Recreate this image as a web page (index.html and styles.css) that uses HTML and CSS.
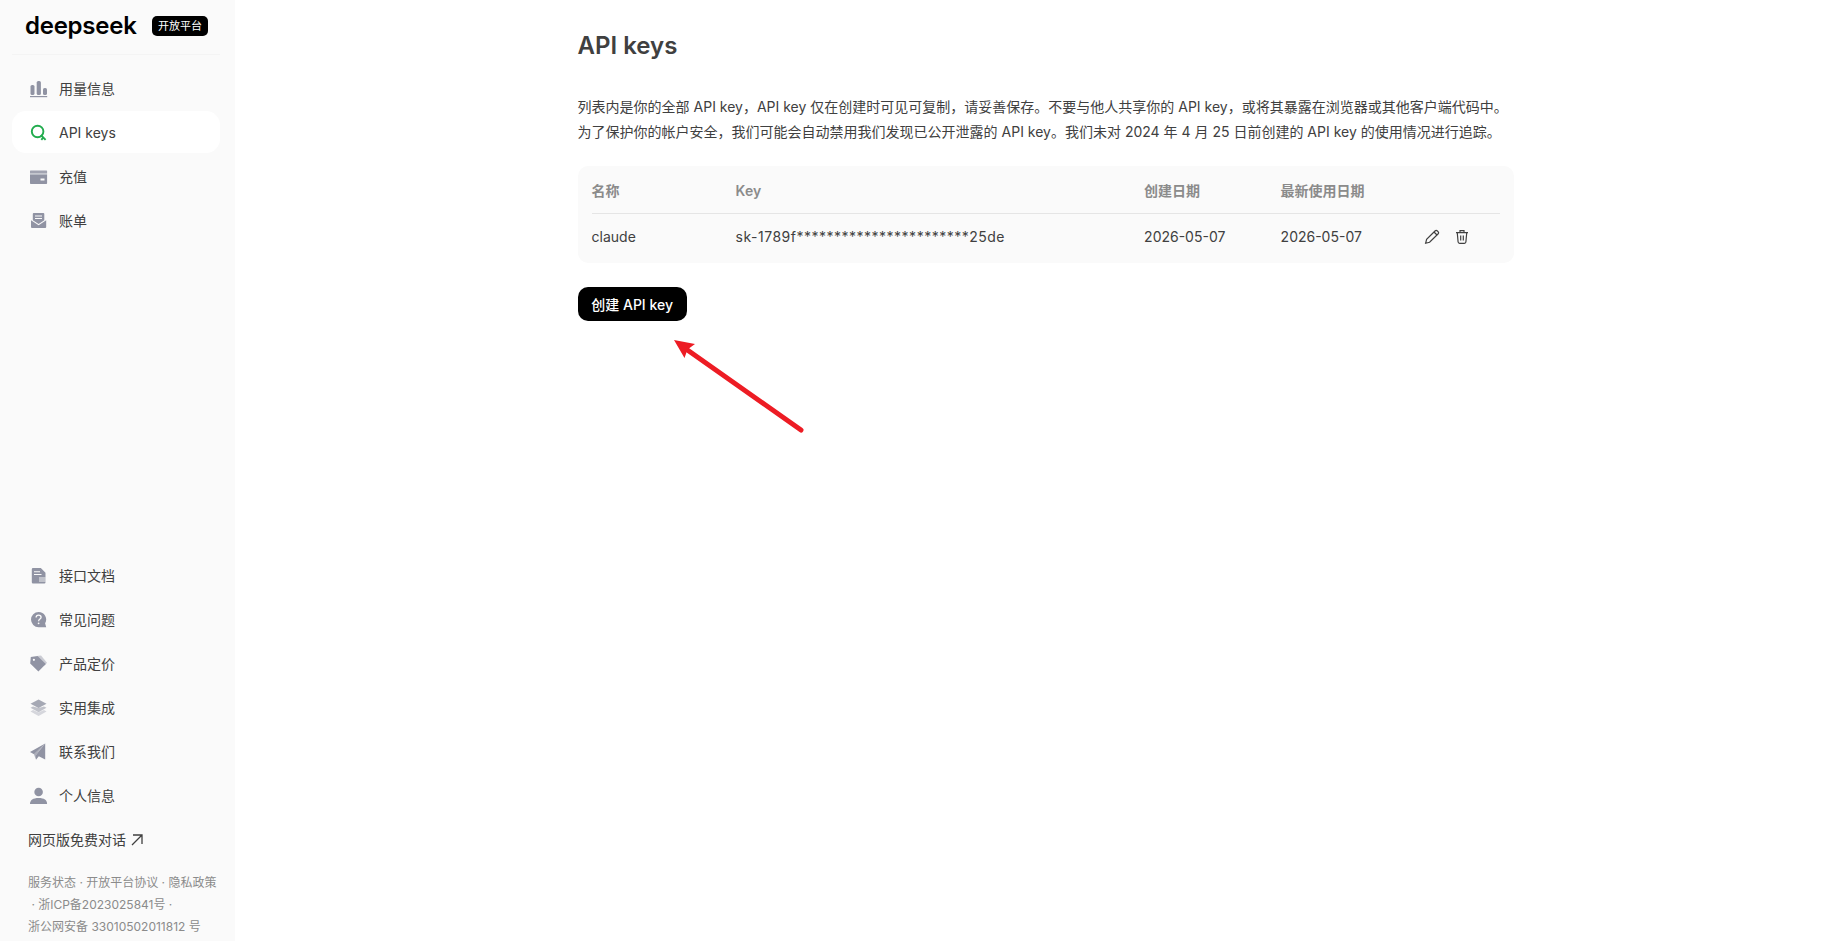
FILE: index.html
```html
<!DOCTYPE html>
<html lang="zh-CN">
<head>
<meta charset="utf-8">
<title>DeepSeek 开放平台</title>
<link rel="stylesheet" href="styles.css">
</head>
<body>
<div class="app">
  <aside class="sidebar">
    <header class="brand"><span class="logo">deepseek</span><span class="badge">开放平台</span></header>
    <nav class="menu">
      <a class="item"><svg class="icon" viewBox="0 0 18 18"><rect x="0.5" y="5" width="4" height="10" rx="1.6"/><rect x="6.7" y="1" width="4.2" height="14" rx="1.6"/><rect x="13" y="8" width="4" height="7" rx="1.6"/><rect x="0" y="16" width="17.2" height="1.2"/></svg><span>用量信息</span></a>
      <a class="item active"><svg class="icon green" viewBox="0 0 18 18"><circle cx="7.600" cy="7.500" r="5.800" fill="none" stroke="currentColor" stroke-width="1.900"/><path d="M10.800 11l4.800 4.800M11.300 15.900l1.900-2.300" fill="none" stroke="currentColor" stroke-width="1.900"/></svg><span>API keys</span></a>
      <a class="item"><svg class="icon" viewBox="0 0 18 18"><path opacity=".85" d="M.5 2.500h16a.6.6 0 0 1 .6.6V5H0V3a.5.5 0 0 1 .5-.5z"/><path opacity=".5" d="M0 5h17.100v1.500H0z"/><path fill-rule="evenodd" d="M0 6.500h17.100v8.700a.8.8 0 0 1-.8.8H.8a.8.8 0 0 1-.8-.8zM10.500 10.400v2h4v-2z"/></svg><span>充值</span></a>
      <a class="item"><svg class="icon" viewBox="0 0 18 18"><path fill-rule="evenodd" d="M3.700 1h9.600a1 1 0 0 1 1 1v6.200L8.600 12 2.800 8.200V2a1 1 0 0 1 .9-1zM5 3.400v1h7v-1zM5 6v1h7V6z"/><path d="M1 8.200l7.600 5 7.600-5V15a1 1 0 0 1-1 1H2a1 1 0 0 1-1-1z"/></svg><span>账单</span></a>
    </nav>
    <div class="bottom">
      <nav class="menu">
        <a class="item"><svg class="icon" viewBox="0 0 18 18"><path fill-rule="evenodd" d="M3 1h7.800l4.700 4.700V10H9v5h6.500v.2a1.200 1.200 0 0 1-1.200 1.200H3A1.200 1.200 0 0 1 1.800 15.200V2.200A1.200 1.200 0 0 1 3 1zM4 4.200v1.100h6V4.200zM4 7v1.100h7.500V7z"/><path opacity=".55" d="M9 10h6.600v5H9z"/></svg><span>接口文档</span></a>
        <a class="item"><svg class="icon" viewBox="0 0 18 18"><path d="M8.600 1a7.500 7.500 0 0 1 6.500 11.300l1.100 3.900H8.600A7.600 7.600 0 1 1 8.600 1z"/><path d="M6.100 6.600c0-1.500 1-2.500 2.500-2.500s2.500.9 2.500 2.200c0 1.900-2.500 1.700-2.500 4" fill="none" stroke="#fafafa" stroke-width="1.300"/><circle cx="8.600" cy="12.300" r=".9" fill="#fafafa"/></svg><span>常见问题</span></a>
        <a class="item"><svg class="icon" viewBox="0 0 18 18"><path opacity=".45" d="M7 1l4-.5 6 7.200-2.500 3z"/><path fill-rule="evenodd" d="M.8 2L7.500 1l8.300 8L8.400 16.500.2 8.500zM3.900 3.700a1.100 1.100 0 1 0 0 2.200 1.100 1.100 0 0 0 0-2.200z"/></svg><span>产品定价</span></a>
        <a class="item"><svg class="icon" viewBox="0 0 18 18"><path opacity=".35" d="M.5 12.500L3 11l5.600 2.500L14 11l2.500 1.500-7.900 4.500z"/><path opacity=".55" d="M.5 8.800L3 7.500l5.600 1.500L14 7.500l2.500 1.300-7.900 4.400z"/><path opacity=".8" d="M8.600.5l7.900 4.200-7.900 4.300L.5 4.700z"/></svg><span>实用集成</span></a>
        <a class="item"><svg class="icon" viewBox="0 0 18 18"><path d="M15.200.5L0 8.900l4 2.300zM15.200.5L6 12v4.700l2.800-3.400 6.400 3.200z"/><path opacity=".75" d="M15.200.5L4 11.200l2 5.500V12z"/></svg><span>联系我们</span></a>
        <a class="item"><svg class="icon" viewBox="0 0 18 18"><circle cx="8.600" cy="5" r="4.300"/><path d="M0 17c0-4 3-6 8.600-6s8.500 2 8.500 6z"/></svg><span>个人信息</span></a>
      </nav>
      <a class="chat"><span>网页版免费对话</span><svg class="out" viewBox="0 0 12 12"><path d="M1 11L11 1M2 1h9v9"/></svg></a>
      <footer class="legal">服务状态 · 开放平台协议 · 隐私政策<br>&nbsp;· 浙ICP备2023025841号 ·<br>浙公网安备 33010502011812 号</footer>
    </div>
  </aside>
  <main class="main">
    <h1 class="title">API keys</h1>
    <p class="desc">列表内是你的全部 API key，API key 仅在创建时可见可复制，请妥善保存。不要与他人共享你的 API key，或将其暴露在浏览器或其他客户端代码中。<br>为了保护你的帐户安全，我们可能会自动禁用我们发现已公开泄露的 API key。我们未对 2024 年 4 月 25 日前创建的 API key 的使用情况进行追踪。</p>
    <section class="card">
      <div class="row head"><span>名称</span><span>Key</span><span>创建日期</span><span>最新使用日期</span></div>
      <div class="row"><span>claude</span><span class="key">sk-1789f***********************25de</span><span>2026-05-07</span><span>2026-05-07</span>
        <span class="actions">
          <svg class="act" viewBox="0 0 16 16"><path d="M1.600 14.300l1-4L11 2a1.700 1.700 0 0 1 2.400 0l.6.6a1.700 1.700 0 0 1 0 2.400L5.600 13.300zM10 3l3 3"/></svg>
          <svg class="act" viewBox="0 0 16 16"><path d="M2 3.700h12M6 3.500V1.700h4v1.800M3.300 4l.8 9a1.500 1.500 0 0 0 1.500 1.300h4.800a1.500 1.500 0 0 0 1.500-1.300l.8-9M6.700 6.500v5M9.300 6.500v5"/></svg>
        </span></div>
    </section>
    <button class="create">创建 API key</button>
  </main>
  <svg class="arrow" viewBox="0 0 132 96"><path class="shaft" d="M12 9L127 90"/><path class="tip" d="M0 0l21 4-7.500 5.500L10.500 18z"/></svg>
</div>
</body>
</html>
```
FILE: styles.css
```css
* { box-sizing: border-box; }
body {
  margin: 0;
  background: #fff;
  color: #404040;
  font: 14px/22px Inter, "Noto Sans CJK SC", sans-serif;
}
.app { position: relative; display: flex; height: 941px; overflow: hidden; }
.sidebar {
  display: flex;
  flex-direction: column;
  width: 235px;
  padding: 0 15px 0 12px;
  background: #fafafa;
}
.brand {
  display: flex;
  align-items: center;
  height: 55px;
  padding: 0 0 3px 13px;
  border-bottom: 1px solid #f4f4f4;
}
.logo {
  width: 127px;
  color: #000;
  font: 600 24px/28px Inter, sans-serif;
  letter-spacing: -.25px;
}
.badge {
  width: 56px;
  height: 20px;
  border-radius: 5px;
  background: #000;
  color: #fff;
  font-size: 11px;
  line-height: 20px;
  text-align: center;
}
.menu { display: flex; flex-direction: column; gap: 2px; }
.brand + .menu { padding-top: 12px; }
.item {
  display: flex;
  align-items: center;
  gap: 11px;
  height: 42px;
  padding-left: 18px;
  border-radius: 14px;
}
.brand + .menu .item { padding-top: 1px; }
.active { background: #fff; }
.icon { width: 18px; height: 18px; color: #9093a3; fill: currentColor; }
.green { color: #22ac4e; }
.bottom { margin-top: auto; }
.chat { display: flex; align-items: center; gap: 5px; height: 46px; padding: 0 0 0 16px; }
.out { width: 12px; height: 12px; fill: none; stroke: #404040; stroke-width: 1.3; }
.legal {
  padding: 9px 0 3px 16px;
  color: #8b8b8b;
  font-size: 12px;
  white-space: nowrap;
}
.main { width: 1279px; padding: 28px 0 0 342.600px; }
.title { margin: 0; font-size: 24px; font-weight: 600; line-height: 36px; }
.desc { margin: 30px 0 22px; line-height: 25px; white-space: nowrap; }
.card { height: 97px; padding: 0 14px; border-radius: 10px; background: #fafafa; }
.row {
  display: grid;
  grid-template-columns: 144px 408.500px 136.500px 143px 1fr;
  align-items: center;
  height: 46px;
}
.head {
  height: 48px;
  padding-top: 3px;
  border-bottom: 1px solid #e5e5e5;
  color: #8b8b8b;
  font-weight: 600;
}
.key { letter-spacing: .5px; }
.actions { display: flex; gap: 14px; }
.act { width: 16px; height: 16px; fill: none; stroke: #404040; stroke-width: 1.2; }
.create {
  width: 109px;
  height: 34px;
  margin-top: 24px;
  padding: 1px 0 0;
  border: 0;
  border-radius: 10px;
  background: #000;
  color: #fff;
  font: 500 14px/33px Inter, "Noto Sans CJK SC", sans-serif;
}
.arrow { position: absolute; left: 674px; top: 340px; width: 132px; height: 96px; }
.shaft { fill: none; stroke: #ed1c24; stroke-width: 5; stroke-linecap: round; }
.tip { fill: #ed1c24; }
```
